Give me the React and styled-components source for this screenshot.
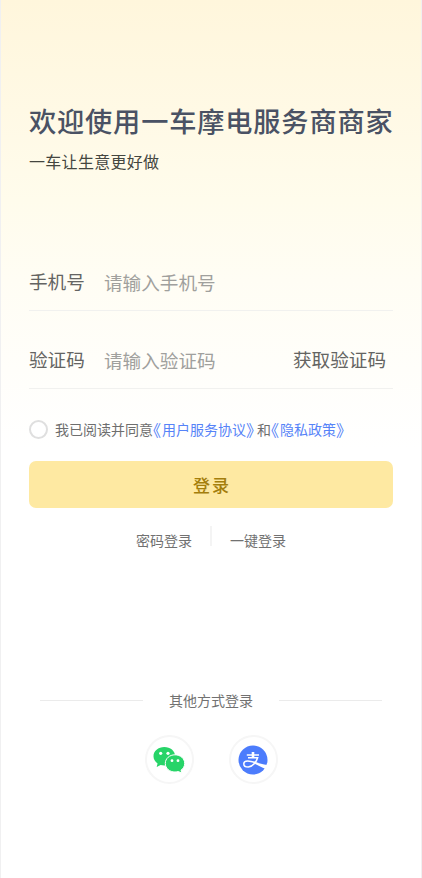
import { useState } from 'react'
import styled, { createGlobalStyle } from 'styled-components'

const GlobalStyle = createGlobalStyle`
  * {
    box-sizing: border-box;
  }
  body {
    margin: 0;
    font-family: "Noto Sans CJK SC", sans-serif;
  }
  button, input {
    font-family: inherit;
    border: none;
    padding: 0;
    background: none;
    outline: none;
  }
`

function WechatIcon() {
	return (
		<svg width="32" height="28" viewBox="0 0 32 28">
			<path
				fill="#27d468"
				d="M11.3 1C5.3 1 .5 5 .5 10.2c0 3 1.600 5.500 4.100 7.200l-1 3.700 4-2.100c1.200.3 2.400.5 3.700.5 6 0 10.800-4 10.800-9.300S17.300 1 11.300 1z"
			/>
			<path
				fill="#27d468"
				stroke="#fff"
				strokeWidth="1"
				d="M22 8.800c-5.400 0-9.700 3.700-9.700 8.600s4.300 8.600 9.700 8.600c1.200 0 2.300-.2 3.400-.5l3.400 1.700-.8-3c2.300-1.600 3.700-4 3.700-6.800 0-4.900-4.300-8.600-9.700-8.600z"
			/>
			<g fill="#fff">
				<circle cx="7.700" cy="7.300" r="1.600" />
				<circle cx="15" cy="7.300" r="1.600" />
				<circle cx="19" cy="14.700" r="1.400" />
				<circle cx="25" cy="14.700" r="1.400" />
			</g>
		</svg>
	)
}

function AlipayIcon() {
	return (
		<svg width="30" height="30" viewBox="0 0 30 30">
			<circle cx="15" cy="15" r="14.500" fill="#4c7cfc" />
			<g fill="none" stroke="#fff">
				<path strokeWidth="1.500" d="M8.800 10h12.200" />
				<path strokeWidth="2.600" d="M15 7v5.500" />
				<path
					strokeWidth="1.500"
					d="M10 12.700h9.600c-1.100 4-4.800 9.300-9.300 9.300-2.800 0-4.500-1.200-4.500-3.100 0-1.800 1.600-2.900 3.900-2.900 2.500 0 5.500 1 8.300 2"
				/>
			</g>
			<path fill="#fff" d="M16 16.600c4 1.400 8.500 2.700 13.500 3.300l-1.500 4c-4.500-1.500-8.900-3.900-12.500-5.600z" />
		</svg>
	)
}

export default function App() {
	const [phone, setPhone] = useState('')
	const [code, setCode] = useState('')
	const [agreed, setAgreed] = useState(false)

	return (
		<>
			<GlobalStyle />
			<Page>
				<Title>欢迎使用一车摩电服务商商家</Title>
				<Subtitle>一车让生意更好做</Subtitle>
				<Form>
					<Field>
						<Label>手机号</Label>
						<Input value={phone} onChange={(e) => setPhone(e.target.value)} placeholder="请输入手机号" />
					</Field>
					<Field>
						<Label>验证码</Label>
						<Input value={code} onChange={(e) => setCode(e.target.value)} placeholder="请输入验证码" />
						<CodeButton>获取验证码</CodeButton>
					</Field>
				</Form>
				<Agreement>
					<Radio $checked={agreed} onClick={() => setAgreed(!agreed)} />
					<span>我已阅读并同意</span>
					<Link>
						<Bracket $open>《</Bracket>用户服务协议<Bracket>》</Bracket>
					</Link>
					<span>和</span>
					<Link>
						<Bracket $open>《</Bracket>隐私政策<Bracket>》</Bracket>
					</Link>
				</Agreement>
				<Submit>登录</Submit>
				<Switches>
					<TextButton>密码登录</TextButton>
					<Separator />
					<TextButton>一键登录</TextButton>
				</Switches>
				<Others>
					<Line />
					<span>其他方式登录</span>
					<Line />
				</Others>
				<Socials>
					<Social><WechatIcon /></Social>
					<Social><AlipayIcon /></Social>
				</Socials>
			</Page>
		</>
	)
}

const Page = styled.main`
  display: flex;
  flex-direction: column;
  height: 878px;
  padding: 100px 28px 0;
  border: solid #f0f0f1;
  border-width: 0 1px;
  background: linear-gradient(180deg, #fff6dc 0, #fff9e5 110px, #fffcec 200px, #fffdf4 280px, #fffefa 370px, #fff 450px);
`;

const Title = styled.h1`
  margin: 0;
  font-size: 27.2px;
  font-weight: 500;
  letter-spacing: 0.85px;
  line-height: 40px;
  color: #4a5264;
  white-space: nowrap;
`;

const Subtitle = styled.p`
  margin: 9px 0 0;
  font-size: 16px;
  letter-spacing: 0.3px;
  line-height: 24px;
  color: #444640;
`;

const Form = styled.div`
  margin-top: 60px;
`;

const Field = styled.div`
  display: flex;
  align-items: center;
  height: 78px;
  padding: 19px 7px 0 0;
  border-bottom: 1px solid #f1f1ef;
`;

const Label = styled.label`
  width: 75px;
  font-size: 18.6px;
  line-height: 28px;
  color: #646462;
`;

const Input = styled.input`
  flex: 1;
  min-width: 0;
  height: 28px;
  font-size: 18.6px;
  color: #333;
  &::placeholder {
    color: #a0a09d;
    opacity: 1;
  }
`;

const CodeButton = styled.button`
  font-size: 18.6px;
  line-height: 28px;
  color: #646462;
`;

const Agreement = styled.div`
  display: flex;
  align-items: center;
  height: 20px;
  margin-top: 30px;
  font-size: 14px;
  line-height: 20px;
  color: #6e6e6e;
`;

const Radio = styled.button`
  width: 19px;
  height: 19px;
  margin-right: 7px;
  border: 2px solid ${(p) => (p.$checked ? '#4c7cfc' : '#dfdfdf')};
  border-radius: 50%;
  background: ${(p) => (p.$checked ? '#4c7cfc' : '#fff')};
`;

const Link = styled.span`
  display: flex;
  color: #5683f8;
`;

const Bracket = styled.span`
  width: ${(p) => (p.$open ? '9px' : '11px')};
  font-size: 16px;
  font-feature-settings: "halt";
`;

const Submit = styled.button`
  flex: none;
  height: 47px;
  margin-top: 22px;
  border-radius: 7px;
  background: #fee9a2;
  font-size: 17px;
  font-weight: 500;
  letter-spacing: 2px;
  text-indent: 2px;
  color: #a47e0c;
`;

const Switches = styled.div`
  display: flex;
  justify-content: center;
  gap: 18px;
  margin-top: 18px;
`;

const TextButton = styled.button`
  height: 20px;
  margin-top: 4px;
  font-size: 14px;
  line-height: 20px;
  color: #717171;
`;

const Separator = styled.i`
  width: 2px;
  height: 20px;
  background: #f4f4f4;
`;

const Others = styled.div`
  display: flex;
  align-items: center;
  justify-content: space-between;
  margin-top: 140px;
  padding: 0 11px;
  font-size: 14px;
  line-height: 20px;
  color: #717171;
`;

const Line = styled.i`
  width: 103px;
  height: 1px;
  background: #ebebeb;
`;

const Socials = styled.div`
  display: flex;
  justify-content: center;
  gap: 35px;
  margin-top: 25px;
`;

const Social = styled.button`
  display: flex;
  align-items: center;
  justify-content: center;
  width: 49px;
  height: 49px;
  border: 2px solid #f6f6f6;
  border-radius: 50%;
`;
